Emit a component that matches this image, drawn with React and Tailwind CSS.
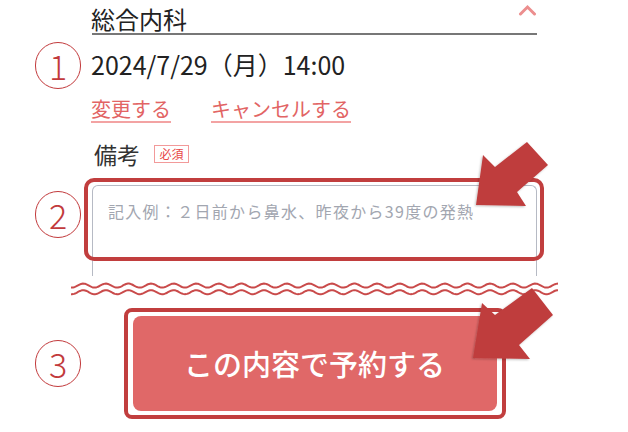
const jp = "font-['Noto_Sans_CJK_JP','Noto_Sans',sans-serif]";

const wave = (cy, x0, x1) => {
  let d = "";
  for (let x = x0; x <= x1; x += 1) {
    const y = cy - 2 * Math.sin((2 * Math.PI * (x - 77.6)) / 22.6);
    d += (x === x0 ? "M" : "L") + x + " " + y.toFixed(2) + " ";
  }
  return d;
};

function Num({ n, top }) {
  return (
    <div
      className={`absolute left-[35px] w-[46px] h-[47px] rounded-full border-[1.5px] border-[#c23a3c] flex items-center justify-center text-[#c23a3c] text-[34px] font-light leading-none ${jp}`}
      style={{ top }}
    >
      {n}
    </div>
  );
}

export default function App() {
  return (
    <div className={`relative w-[628px] h-[432px] overflow-hidden bg-white text-[#222] ${jp}`}>
      <div className="ml-[92px] w-[445px] flex flex-col">
        {/* department */}
        <div className="relative pt-[5px] border-b-2 border-[#777]">
          <p className="text-[24px] leading-[28px] -ml-[1px]">総合内科</p>
          <svg className="absolute right-0 top-[4px]" width="19" height="12" viewBox="0 0 19 12">
            <path d="M2.5 10 L9.5 3 L16.5 10" fill="none" stroke="#ec8e8e" strokeWidth="3" strokeLinecap="round" />
          </svg>
        </div>

        {/* date */}
        <p className="mt-[14px] text-[25px] leading-[30px] -ml-[1px]">2024/7/29（月）14:00</p>

        {/* links */}
        <div className="mt-[17px] flex gap-[40px] text-[20px] leading-[26px] text-[#e26464] -ml-[1px]">
          <a className="underline decoration-[#f3a3a3] underline-offset-[4px]">変更する</a>
          <a className="underline decoration-[#f3a3a3] underline-offset-[4px]">キャンセルする</a>
        </div>

        {/* note label */}
        <div className="mt-[17px] ml-[2px] flex items-center gap-[14px]">
          <p className="text-[23px] leading-[30px] text-[#333]">備考</p>
          <span className="w-[35px] h-[18px] border border-[#f29a9a] text-[#e84646] text-[12px] leading-none flex items-center justify-center">
            必須
          </span>
        </div>

        {/* textarea */}
        <textarea
          className="mt-[16px] w-[445px] h-[91px] resize-none border-[1.5px] border-b-0 border-[#b6bac4] rounded-t-[6px] pl-[15px] pt-[14px] text-[16px] leading-[22px] tracking-[1.3px] outline-none placeholder:text-[#a2a6b0]"
          placeholder="記入例：２日前から鼻水、昨夜から39度の発熱"
        />

        {/* submit */}
        <div className="mt-[32px] self-center border-4 border-[#c13e3e] rounded-[8px] py-[4px] px-[5px]">
          <button className="w-[364px] h-[95px] rounded-[8px] bg-[#e06868] text-white text-[29px] font-medium">
            この内容で予約する
          </button>
        </div>
      </div>

      {/* annotations */}
      <div className="absolute left-[84px] top-[178px] w-[460px] h-[83px] border-4 border-[#c13e3e] rounded-[10px]" />
      <Num n="1" top={42} />
      <Num n="2" top={191} />
      <Num n="3" top={340} />

      <svg className="absolute inset-0 pointer-events-none" width="628" height="432">
        <defs>
          <filter id="sh" x="-20%" y="-20%" width="140%" height="140%">
            <feDropShadow dx="-1" dy="1" stdDeviation="1.2" floodColor="#000" floodOpacity="0.25" />
          </filter>
        </defs>
        <rect x="66" y="280" width="497" height="18" fill="#fff" />
        <path d={wave(285.6, 71, 558)} fill="none" stroke="#c94a4a" strokeWidth="2" />
        <path d={wave(292.2, 71, 558)} fill="none" stroke="#c94a4a" strokeWidth="2" />
        <polygon
          points="476,205 483,155 495,167 527,142 548,165 517,192 526,206"
          fill="#bf3e3e"
          filter="url(#sh)"
        />
        <polygon
          points="473,358 482,303 495,315 532,288 553,315 519,345 530,359"
          fill="#bf3e3e"
          filter="url(#sh)"
        />
      </svg>
    </div>
  );
}
